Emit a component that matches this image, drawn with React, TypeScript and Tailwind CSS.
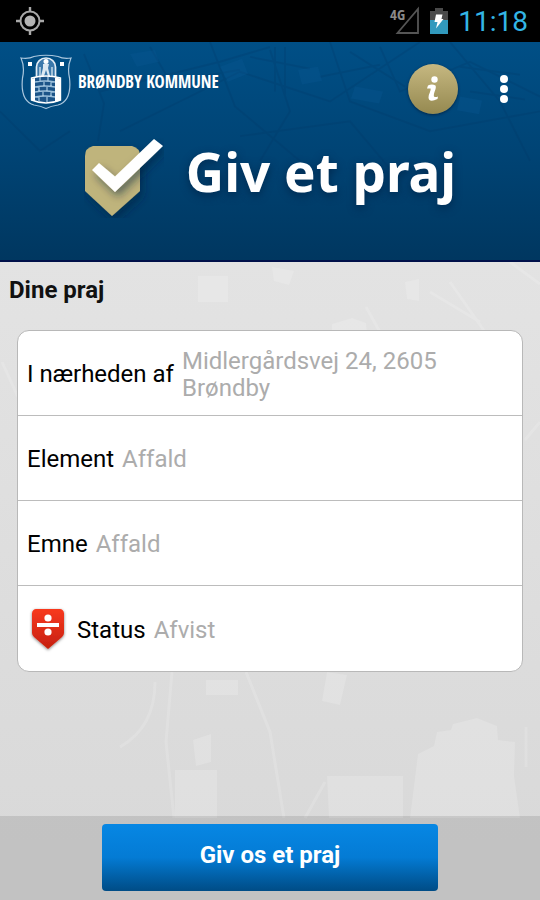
import React from "react";

const details = [
  { label: "I nærheden af", value: "Midlergårdsvej 24, 2605 Brøndby" },
  { label: "Element", value: "Affald" },
  { label: "Emne", value: "Affald" },
  { label: "Status", value: "Afvist", rejected: true },
];

function GpsIcon() {
  return (
    <svg width="28" height="28" viewBox="0 0 28 28" aria-hidden="true">
      <circle cx="14" cy="14" r="9.5" fill="none" stroke="#a8a8a8" strokeWidth="2" />
      <circle cx="14" cy="14" r="5.5" fill="#b4b4b4" />
      <path d="M14 0v5M14 23v5M0 14h5M23 14h5" stroke="#a8a8a8" strokeWidth="2.4" />
    </svg>
  );
}

function SignalIcon() {
  return (
    <svg className="overflow-visible" width="32" height="34" viewBox="0 0 32 34" aria-label="4G">
      <path d="M9.5 29H30V5Z" fill="none" stroke="#555" strokeWidth="1.8" />
      <text x="2" y="16" fontSize="15" fontWeight="700" fill="#8a8a8a" fontFamily="'Open Sans Condensed','Roboto Condensed','Liberation Sans Narrow',sans-serif">4G</text>
    </svg>
  );
}

function BatteryIcon() {
  return (
    <svg width="18" height="26" viewBox="0 0 18 26" aria-hidden="true">
      <path d="M0 3h5V0h8v3h5v9H0Z" fill="#4a4a4a" />
      <path d="M0 12h18v14H0Z" fill="#3199bd" />
      <path d="M6 6.500h6.500l-1 4.500h2L6 20.500l1.500-6.500H4.500Z" fill="#fff" />
    </svg>
  );
}

function Crest() {
  return (
    <svg width="52" height="56" viewBox="0 0 52 56" aria-hidden="true">
      <path d="M1 4Q9 5 14 2.500Q26 0 38 2.500Q43 5 51 4Q47 13 49.500 24Q52 47 38 51Q31 52 26 54.500Q21 52 14 51Q0 47 2.500 24Q5 13 1 4Z" fill="none" stroke="#a9c6dd" strokeWidth="1.2" />
      <path d="M8 8h4v4h-4ZM40 8h4v4h-4Z" fill="#fff" />
      <path d="M16.500 24V13a9.500 9 0 0 1 19 0v11Z" fill="#3b78aa" stroke="#e4edf5" strokeWidth="1.700" />
      <path d="M23 10h6l-1 4 2 8h-2l-2-6-2 6h-3l2-8Z" fill="#dce8f1" />
      <path d="M20 22V13M32 22V13" stroke="#c5d9e8" strokeWidth="1.500" />
      <circle cx="26" cy="7.500" r="2.500" fill="#fff" />
      <path d="M11.500 24Q26 20 40.500 24V46Q26 52 11.500 46Z" fill="#1c5488" stroke="#fff" strokeWidth="1.400" />
      <path d="M35 23.500q3 0 6 1.500v21q-3 1.500-6 2Z" fill="#fff" />
      <path d="M11 25l4-1v23l-4-1Z" fill="#fff" />
      <path d="M15 28q10-2 20 0M15 33q10-2 20 0M15 38q10-2 20 0M15 43q10-2 20 0M20 23v4M28 23v4M24 27v5M31 27v5M19 32v5M27 32v5M23 37v5M31 37v5M19 42v6M27 42v6" fill="none" stroke="#9dc0db" strokeWidth="1.300" />
    </svg>
  );
}

function CheckBadge() {
  return (
    <svg width="80" height="80" viewBox="0 0 80 80" aria-hidden="true">
      <defs>
        <filter id="badgeShadow" x="-20%" y="-20%" width="160%" height="160%">
          <feDropShadow dx="3" dy="5" stdDeviation="4" floodColor="#001c3a" floodOpacity="0.5" />
        </filter>
      </defs>
      <path d="M9 8H48Q56 10 56 18V53L28 78L1 53V18Q1 10 9 8Z" fill="#bfb47b" filter="url(#badgeShadow)" />
      <path d="M8 32L15 25L31 38.500L70 1L79 8L31 54Z" fill="#fff" filter="url(#badgeShadow)" />
    </svg>
  );
}

function RejectedIcon() {
  return (
    <svg width="42" height="48" viewBox="0 0 42 48" role="img" aria-label="Afvist">
      <defs>
        <linearGradient id="red" x1="0" y1="0" x2="0" y2="1">
          <stop offset="0" stopColor="#f8391f" />
          <stop offset="1" stopColor="#c5200f" />
        </linearGradient>
        <filter id="redShadow" x="-20%" y="-20%" width="140%" height="140%">
          <feDropShadow dx="0" dy="1" stdDeviation="1.8" floodColor="#000" floodOpacity="0.5" />
        </filter>
      </defs>
      <path d="M9 3H33Q36 3 37 7V27Q37 29 35 31L21 43L7 31Q5 29 5 27V7Q6 3 9 3Z" fill="url(#red)" filter="url(#redShadow)" />
      <path d="M10 17H32V21H10Z" fill="#fff" />
      <circle cx="21" cy="12" r="3.600" fill="#fff" />
      <circle cx="21" cy="26" r="3.600" fill="#fff" />
    </svg>
  );
}

function HeaderMap() {
  return (
    <svg className="absolute inset-0 h-full w-full" viewBox="0 0 540 220" preserveAspectRatio="none" aria-hidden="true">
      <g fill="none" stroke="#003462" strokeWidth="2" opacity="0.2">
        <path d="M84 12L104 62 98 100M100 50L220 20 270 5M120 90L240 30 330 60 420 0M150 5L170 40 240 28M210 0L235 65 300 120M270 8L290 70 260 120M330 0L350 60 430 90 540 70M380 5L400 50 470 20 540 55M450 0L500 60 530 120M0 70L40 110 70 90M240 95L350 80 400 140" />
        <path d="M275 5v45M285 5v48M250 15l60 12M320 35l60-12M350 10l55 35M460 25l60 8M470 50l55 8" />
      </g>
      <path d="M298 28l20-3 4 14-20 4ZM220 25l22-8 6 15-20 8ZM460 55l22 4-3 14-22-4ZM130 12l25-4 4 12-22 5ZM355 45l28 5-4 12-28-5Z" fill="#0a5a94" opacity="0.3" />
    </svg>
  );
}

function PageMap() {
  return (
    <svg className="absolute inset-0 h-full w-full" viewBox="0 0 540 638" preserveAspectRatio="none" aria-hidden="true">
      <g fill="#fff" opacity="0.17">
        <path d="M198 14h30v26h-30ZM332 62l20-6 14 5 2 20h-36ZM405 20l14-3v22l-12-2ZM272 5l22 4-5 14-15-4ZM206 418h32v15h-32ZM327 410l20 3-7 30-18-4ZM193 478l18-6v28l-15 4ZM175 508h42v48h-42ZM327 514h76v42h-74ZM418 492l16-8 3-14 14-2 2-6 24-6 20 8 1 14 17 2-1 34 6 42H410Z" />
      </g>
      <g fill="none" stroke="#fff" strokeWidth="3" opacity="0.15">
        <path d="M172 410L166 480 174 556M155 420Q155 465 120 485M246 410L270 470 284 556M366 45L380 70M430 30l50 30M450 20l35 50M540 160l-15 18M526 465v40M325 520l-20 36M2 100L18 135M510 0l30 22" />
      </g>
    </svg>
  );
}

export default function App() {
  return (
    <div className="flex min-h-screen flex-col bg-[#dfdfdf] font-[Roboto,sans-serif] text-black">
      <div className="flex h-[42px] items-center justify-between bg-black pl-4 pr-3">
        <GpsIcon />
        <div className="flex items-center gap-[10px]">
          <SignalIcon />
          <BatteryIcon />
          <time className="pt-[2px] text-[28px] leading-8 text-[#33b5e5]">11:18</time>
        </div>
      </div>

      <header className="relative h-[220px] border-b-2 border-[#00104a] bg-linear-to-b from-[#004f86] via-[#004475] to-[#003760]">
        <HeaderMap />
        <div className="relative flex items-start justify-between pl-5 pr-7 pt-2">
          <div className="flex items-center gap-[6px] pt-1">
            <Crest />
            <span className="font-['Open_Sans_Condensed','Roboto_Condensed','Liberation_Sans_Narrow',sans-serif] text-[17px] font-bold leading-6 text-white">
              BRØNDBY KOMMUNE
            </span>
          </div>
          <div className="flex items-center gap-[38px] pt-[14px]">
            <button
              aria-label="Information"
              className="flex h-[50px] w-[50px] items-center justify-center rounded-full bg-linear-to-b from-[#c6b881] to-[#958950] shadow-[0_1px_3px_#00264a]"
            >
              <svg width="14" height="26" viewBox="0 0 14 26" aria-hidden="true">
                <circle cx="8.500" cy="3.500" r="3.200" fill="#fff" />
                <path d="M2 9.500Q6 7.500 9.500 9.500Q10.500 12 8.500 16Q7.500 19 8 20.500Q9.500 21.500 12 20.500L11.500 23Q3 27 2.500 21.500Q2.500 19 4 16Q5 13 4.500 12.500L1 12.500Z" fill="#fff" />
              </svg>
            </button>
            <button aria-label="Menu" className="flex w-4 flex-col items-center gap-[2px]">
              <span className="h-2 w-2 rounded-full bg-white" />
              <span className="h-2 w-2 rounded-full bg-white" />
              <span className="h-2 w-2 rounded-full bg-white" />
            </button>
          </div>
        </div>
        <div className="relative flex items-start justify-center gap-[22px] pt-6">
          <CheckBadge />
          <h1 className="font-['Noto_Sans',sans-serif] text-[53px] font-bold leading-[68px] text-white [text-shadow:0_3px_8px_#002a50]">Giv et praj</h1>
        </div>
      </header>

      <div className="relative flex grow flex-col bg-linear-to-b from-[#e3e3e3] to-[#d8d8d8]">
        <PageMap />
        <main className="relative grow px-[17px] pb-8">
          <h2 className="-ml-2 pt-3 text-[24px] font-bold leading-8 text-[#111]">Dine praj</h2>
          <dl className="mt-6 divide-y divide-[#bcbcbc] overflow-hidden rounded-xl border border-[#b8b8b8] bg-white text-[24px] leading-[27px]">
            {details.map((row) => (
              <div key={row.label} className="flex min-h-[85px] items-center gap-2 px-[9px] pt-[3px]">
                {row.rejected && <RejectedIcon />}
                <dt className="shrink-0">{row.label}</dt>
                <dd className="max-w-[280px] text-[#acacac]">{row.value}</dd>
              </div>
            ))}
          </dl>
        </main>
        <footer className="relative flex justify-center bg-black/10 px-4 pb-[9px] pt-2">
          <button className="h-[67px] w-[336px] max-w-full rounded-[4px] bg-linear-to-b from-[#0787e4] via-[#047bd4] to-[#004c86] pb-[6px] text-[24px] font-bold text-white">
            Giv os et praj
          </button>
        </footer>
      </div>
    </div>
  );
}
